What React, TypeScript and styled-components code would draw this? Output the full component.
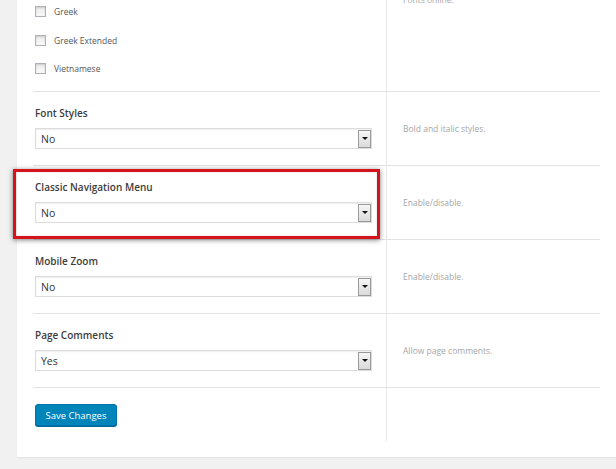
import React from "react";
import styled, { createGlobalStyle } from "styled-components";

const GlobalStyle = createGlobalStyle`
  html, body {
    margin: 0;
    padding: 0;
    background: #f1f1f1;
    overflow: hidden;
  }
  body {
    font-family: "Open Sans", "Noto Sans", sans-serif;
    color: #444;
  }
`;

const Page = styled.div`
  width: 616px;
  height: 469px;
  overflow: hidden;
`;

const Panel = styled.div`
  margin: -124px 0 0 17px;
  width: 631px;
  padding: 0 16px 16px;
  box-sizing: border-box;
  background: #fff;
  box-shadow: 0 1px 1px rgba(0, 0, 0, 0.05);
`;

const Table = styled.div`
  width: 567px;
`;

const Row = styled.div<{ $last?: boolean }>`
  display: grid;
  grid-template-columns: 354px 1fr;
  border-bottom: ${(p) => (p.$last ? "none" : "1px solid #e3e3e3")};
`;

const FieldCell = styled.div`
  position: relative;
  padding: 12px 15px 16px 2px;
  border-right: 1px solid #e8e8e8;
  display: flex;
  flex-direction: column;
  gap: 6px;
`;

const CheckCell = styled(FieldCell)`
  padding-bottom: 8px;
`;

const ButtonCell = styled(FieldCell)`
  padding: 16px 15px 15px 2px;
`;

const DescCell = styled.div<{ $shift?: number }>`
  display: flex;
  align-items: center;
  padding: ${(p) => p.$shift ?? 0}px 16px 0;
  font-size: 8.5px;
  line-height: 14px;
  color: #a6a6a6;
`;

const Label = styled.div`
  font-size: 10px;
  font-weight: 600;
  line-height: 18px;
  color: #3d3d3d;
`;

const CheckList = styled.div`
  display: flex;
  flex-direction: column;
`;

const CheckItem = styled.label`
  display: flex;
  align-items: center;
  gap: 8px;
  height: 28.5px;
  font-size: 8.5px;
  color: #555;
`;

const CheckBox = styled.span`
  width: 9px;
  height: 9px;
  border: 1px solid #aeb2b6;
  background: linear-gradient(#ececec, #fafafa);
  box-shadow: inset 0 1px 2px rgba(0, 0, 0, 0.15);
  flex: none;
`;

const SelectBox = styled.div`
  height: 21px;
  width: 337px;
  box-sizing: border-box;
  border: 1px solid #dcdcdc;
  box-shadow: inset 0 1px 2px rgba(0, 0, 0, 0.07);
  display: flex;
  align-items: center;
  justify-content: space-between;
  padding: 0 0 0 5px;
  font-size: 10.5px;
  color: #333;
  background: #fff;
`;

const ArrowButton = styled.span`
  width: 13px;
  height: 18px;
  box-sizing: border-box;
  border: 1px solid #9a9a9a;
  background: linear-gradient(#f6f6f6, #dadada);
  display: flex;
  align-items: center;
  justify-content: center;
  &::after {
    content: "";
    border-left: 3px solid transparent;
    border-right: 3px solid transparent;
    border-top: 3px solid #111;
  }
`;

const Highlight = styled.div`
  position: absolute;
  left: -20px;
  right: 6px;
  top: 3px;
  bottom: 0;
  border: 3px solid #d3141d;
  box-shadow: 0 1px 5px rgba(0, 0, 0, 0.5), inset 0 0 2px rgba(0, 0, 0, 0.2);
  pointer-events: none;
`;

const SaveButton = styled.button`
  width: 82px;
  height: 22px;
  padding: 0;
  border: 1px solid #0073aa;
  border-radius: 3px;
  background: #0085ba;
  box-shadow: 0 1px 0 #006799;
  color: #fff;
  font-family: "Open Sans", "Noto Sans", sans-serif;
  font-size: 9.5px;
`;

type SelectRowProps = {
  label: string;
  value: string;
  desc: string;
  highlight?: boolean;
};

const Select = ({ value }: { value: string }) => (
  <SelectBox>
    <span>{value}</span>
    <ArrowButton />
  </SelectBox>
);

const SelectRow = ({ label, value, desc, highlight }: SelectRowProps) => (
  <Row>
    <FieldCell>
      <Label>{label}</Label>
      <Select value={value} />
      {highlight && <Highlight />}
    </FieldCell>
    <DescCell>{desc}</DescCell>
  </Row>
);

const subsets = [
  "Latin Extended",
  "Cyrillic",
  "Cyrillic Extended",
  "Greek",
  "Greek Extended",
  "Vietnamese",
];

export default function App() {
  return (
    <Page>
      <GlobalStyle />
      <Panel>
        <Table>
          <Row>
            <CheckCell>
              <Label>Font Subsets</Label>
              <CheckList>
                {subsets.map((s) => (
                  <CheckItem key={s}>
                    <CheckBox />
                    {s}
                  </CheckItem>
                ))}
              </CheckList>
            </CheckCell>
            <DescCell $shift={4}>
              Choose which character
              <br />
              subsets to load from Google
              <br />
              Fonts online.
            </DescCell>
          </Row>
          <SelectRow label="Font Styles" value="No" desc="Bold and italic styles." />
          <SelectRow
            label="Classic Navigation Menu"
            value="No"
            desc="Enable/disable."
            highlight
          />
          <SelectRow label="Mobile Zoom" value="No" desc="Enable/disable." />
          <SelectRow label="Page Comments" value="Yes" desc="Allow page comments." />
          <Row $last>
            <ButtonCell>
              <SaveButton>Save Changes</SaveButton>
            </ButtonCell>
            <DescCell />
          </Row>
        </Table>
      </Panel>
    </Page>
  );
}
